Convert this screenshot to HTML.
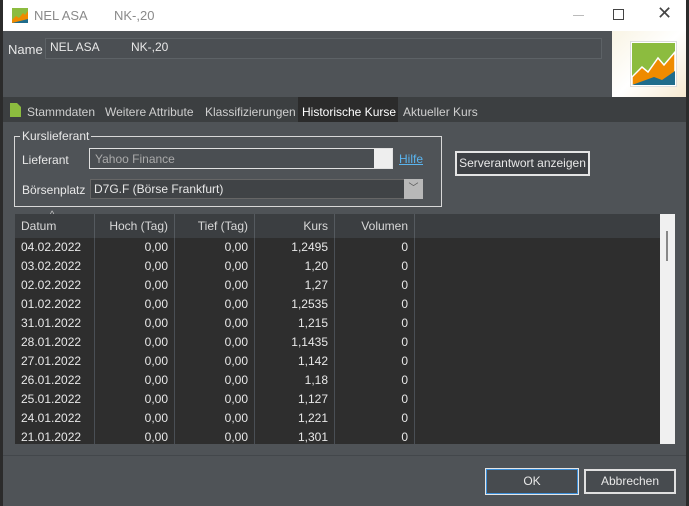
<!DOCTYPE html>
<html><head><style>
*{margin:0;padding:0;box-sizing:border-box}
body{width:689px;height:506px;background:#2b2b2b;font-family:"Liberation Sans",sans-serif;font-size:12px;color:#e8e8e8;position:relative;overflow:hidden}
.a{position:absolute}
.win{left:3px;top:0;width:683px;height:506px;background:#4f5357}
.title{left:3px;top:0;width:683px;height:31px;background:#fff;color:#8a8a8a;font-size:13px}
.th{top:214px;height:24px;background:#3b3e41;color:#d8d8d8;border-right:1px solid #555a5f;line-height:24px;padding:0 6px}
.r{color:#e8e8e8;height:19px;line-height:19px}
</style></head><body>
<div class="a win"></div>
<div class="a title">
 <svg class="a" style="left:9px;top:8px" width="16" height="15"><rect width="16" height="15" fill="#8cbc3f"/><path d="M0 12 L4 8 L7 10 L11 5 L13 7 L16 3 V15 H0Z" fill="#ef8b00"/><path d="M0 15 L8 13 L16 11 V15Z" fill="#1f6c8c"/></svg>
 <span class="a" style="left:31px;top:8px">NEL ASA</span><span class="a" style="left:111px;top:8px">NK-,20</span>
 <div class="a" style="left:570px;top:15px;width:11px;height:1px;background:#bbb"></div>
 <div class="a" style="left:610px;top:9px;width:11px;height:11px;border:1px solid #444"></div>
 <span class="a" style="left:654px;top:3px;font-size:18px;color:#444">✕</span>
</div>
<span class="a" style="left:8px;top:42px;font-size:13px">Name</span>
<div class="a" style="left:45px;top:38px;width:557px;height:21px;border:1px solid #5d6266;background:#4b4f53"></div>
<span class="a" style="left:50px;top:40px">NEL ASA</span><span class="a" style="left:131px;top:40px">NK-,20</span>
<div class="a" style="left:612px;top:31px;width:74px;height:66px;background:linear-gradient(135deg,#f9f4e4,#fff 50%,#f6e9d0)"></div>
<svg class="a" style="left:630px;top:41px" width="47" height="46"><rect x="0.5" y="0.5" width="46" height="45" fill="#fff" stroke="#ddd"/><rect x="2" y="2" width="43" height="42" fill="#8cbc3f"/><path d="M2 36 L12 26 L18 31 L28 17 L34 24 L45 11 V44 H2Z" fill="#ef8b00" stroke="#fff" stroke-width="1.5"/><path d="M2 44 L24 36 L32 39 L45 30 V44Z" fill="#1f6c8c"/></svg>
<div class="a" style="left:3px;top:97px;width:683px;height:25px;background:#3c3f41"></div>
<svg class="a" style="left:10px;top:103px" width="11" height="14"><path d="M0 0H7L11 4V14H0Z" fill="#8cbc3f"/></svg>
<span class="a" style="left:27px;top:105px;color:#cfcfcf">Stammdaten</span>
<span class="a" style="left:105px;top:105px;color:#cfcfcf">Weitere Attribute</span>
<span class="a" style="left:205px;top:105px;color:#cfcfcf">Klassifizierungen</span>
<div class="a" style="left:298px;top:97px;width:100px;height:25px;background:#2b2b2b"></div>
<span class="a" style="left:302px;top:105px;color:#fff">Historische Kurse</span>
<span class="a" style="left:403px;top:105px;color:#cfcfcf">Aktueller Kurs</span>
<div class="a" style="left:14px;top:136px;width:428px;height:71px;border:1px solid #d8d8d8"></div>
<span class="a" style="left:20px;top:129px;background:#4f5357;padding:0 2px">Kurslieferant</span>
<span class="a" style="left:22px;top:153px">Lieferant</span>
<div class="a" style="left:89px;top:148px;width:304px;height:21px;border:1px solid #e0e0e0;background:#4a4e52"></div>
<div class="a" style="left:374px;top:149px;width:18px;height:19px;background:#eee"></div>
<span class="a" style="left:95px;top:152px;color:#aaa">Yahoo Finance</span>
<span class="a" style="left:399px;top:152px;color:#5ab4ee;text-decoration:underline">Hilfe</span>
<span class="a" style="left:22px;top:183px">Börsenplatz</span>
<div class="a" style="left:90px;top:179px;width:333px;height:20px;border:1px solid #666;background:#404346"></div>
<div class="a" style="left:404px;top:179px;width:19px;height:20px;background:#b8b8b8;color:#555;text-align:center;font-size:10px;line-height:20px">﹀</div>
<span class="a" style="left:94px;top:182px">D7G.F (Börse Frankfurt)</span>
<div class="a" style="left:455px;top:151px;width:135px;height:25px;border:2px solid #e4e4e4;background:#3d4044;text-align:center;line-height:21px">Serverantwort anzeigen</div>
<div class="a" style="left:15px;top:214px;width:645px;height:230px;background:#2e2e2e"></div>
<div class="a th" style="left:15px;width:80px">Datum</div>
<span class="a" style="left:50px;top:209px;font-size:9px;color:#ccc">^</span>
<div class="a th" style="left:95px;width:80px;text-align:right">Hoch (Tag)</div>
<div class="a th" style="left:175px;width:80px;text-align:right">Tief (Tag)</div>
<div class="a th" style="left:255px;width:80px;text-align:right">Kurs</div>
<div class="a th" style="left:335px;width:80px;text-align:right">Volumen</div>
<div class="a th" style="left:415px;width:245px;border:none"></div>
<div class="a" style="left:94px;top:238px;width:1px;height:206px;background:#4a4f55"></div>
<div class="a" style="left:174px;top:238px;width:1px;height:206px;background:#4a4f55"></div>
<div class="a" style="left:254px;top:238px;width:1px;height:206px;background:#4a4f55"></div>
<div class="a" style="left:334px;top:238px;width:1px;height:206px;background:#4a4f55"></div>
<div class="a" style="left:414px;top:238px;width:1px;height:206px;background:#4a4f55"></div>
<div class="a" style="left:660px;top:214px;width:15px;height:230px;background:#f0f0f0"></div>
<div class="a" style="left:666px;top:231px;width:2px;height:30px;background:#888"></div>
<div class="a" style="left:15px;top:238px;width:400px">
<table style="border-collapse:collapse;width:400px;color:#e8e8e8;font-size:12px">
<colgroup><col style="width:80px"><col style="width:80px"><col style="width:80px"><col style="width:80px"><col style="width:80px"></colgroup>
<tbody>
<tr class="r"><td style="padding-left:6px">04.02.2022</td><td align="right" style="padding-right:7px">0,00</td><td align="right" style="padding-right:7px">0,00</td><td align="right" style="padding-right:7px">1,2495</td><td align="right" style="padding-right:7px">0</td></tr>
<tr class="r"><td style="padding-left:6px">03.02.2022</td><td align="right" style="padding-right:7px">0,00</td><td align="right" style="padding-right:7px">0,00</td><td align="right" style="padding-right:7px">1,20</td><td align="right" style="padding-right:7px">0</td></tr>
<tr class="r"><td style="padding-left:6px">02.02.2022</td><td align="right" style="padding-right:7px">0,00</td><td align="right" style="padding-right:7px">0,00</td><td align="right" style="padding-right:7px">1,27</td><td align="right" style="padding-right:7px">0</td></tr>
<tr class="r"><td style="padding-left:6px">01.02.2022</td><td align="right" style="padding-right:7px">0,00</td><td align="right" style="padding-right:7px">0,00</td><td align="right" style="padding-right:7px">1,2535</td><td align="right" style="padding-right:7px">0</td></tr>
<tr class="r"><td style="padding-left:6px">31.01.2022</td><td align="right" style="padding-right:7px">0,00</td><td align="right" style="padding-right:7px">0,00</td><td align="right" style="padding-right:7px">1,215</td><td align="right" style="padding-right:7px">0</td></tr>
<tr class="r"><td style="padding-left:6px">28.01.2022</td><td align="right" style="padding-right:7px">0,00</td><td align="right" style="padding-right:7px">0,00</td><td align="right" style="padding-right:7px">1,1435</td><td align="right" style="padding-right:7px">0</td></tr>
<tr class="r"><td style="padding-left:6px">27.01.2022</td><td align="right" style="padding-right:7px">0,00</td><td align="right" style="padding-right:7px">0,00</td><td align="right" style="padding-right:7px">1,142</td><td align="right" style="padding-right:7px">0</td></tr>
<tr class="r"><td style="padding-left:6px">26.01.2022</td><td align="right" style="padding-right:7px">0,00</td><td align="right" style="padding-right:7px">0,00</td><td align="right" style="padding-right:7px">1,18</td><td align="right" style="padding-right:7px">0</td></tr>
<tr class="r"><td style="padding-left:6px">25.01.2022</td><td align="right" style="padding-right:7px">0,00</td><td align="right" style="padding-right:7px">0,00</td><td align="right" style="padding-right:7px">1,127</td><td align="right" style="padding-right:7px">0</td></tr>
<tr class="r"><td style="padding-left:6px">24.01.2022</td><td align="right" style="padding-right:7px">0,00</td><td align="right" style="padding-right:7px">0,00</td><td align="right" style="padding-right:7px">1,221</td><td align="right" style="padding-right:7px">0</td></tr>
<tr class="r"><td style="padding-left:6px">21.01.2022</td><td align="right" style="padding-right:7px">0,00</td><td align="right" style="padding-right:7px">0,00</td><td align="right" style="padding-right:7px">1,301</td><td align="right" style="padding-right:7px">0</td></tr>
</tbody></table></div>
<div class="a" style="left:3px;top:455px;width:683px;height:1px;background:#43474b"></div>
<div class="a" style="left:486px;top:469px;width:92px;height:25px;border:1px solid #3b8ed8;outline:1px solid #e6e6e6;background:#474b4f;text-align:center;line-height:23px">OK</div>
<div class="a" style="left:584px;top:469px;width:92px;height:25px;border:2px solid #e0e0e0;background:#474b4f;text-align:center;line-height:21px">Abbrechen</div>
</body></html>
